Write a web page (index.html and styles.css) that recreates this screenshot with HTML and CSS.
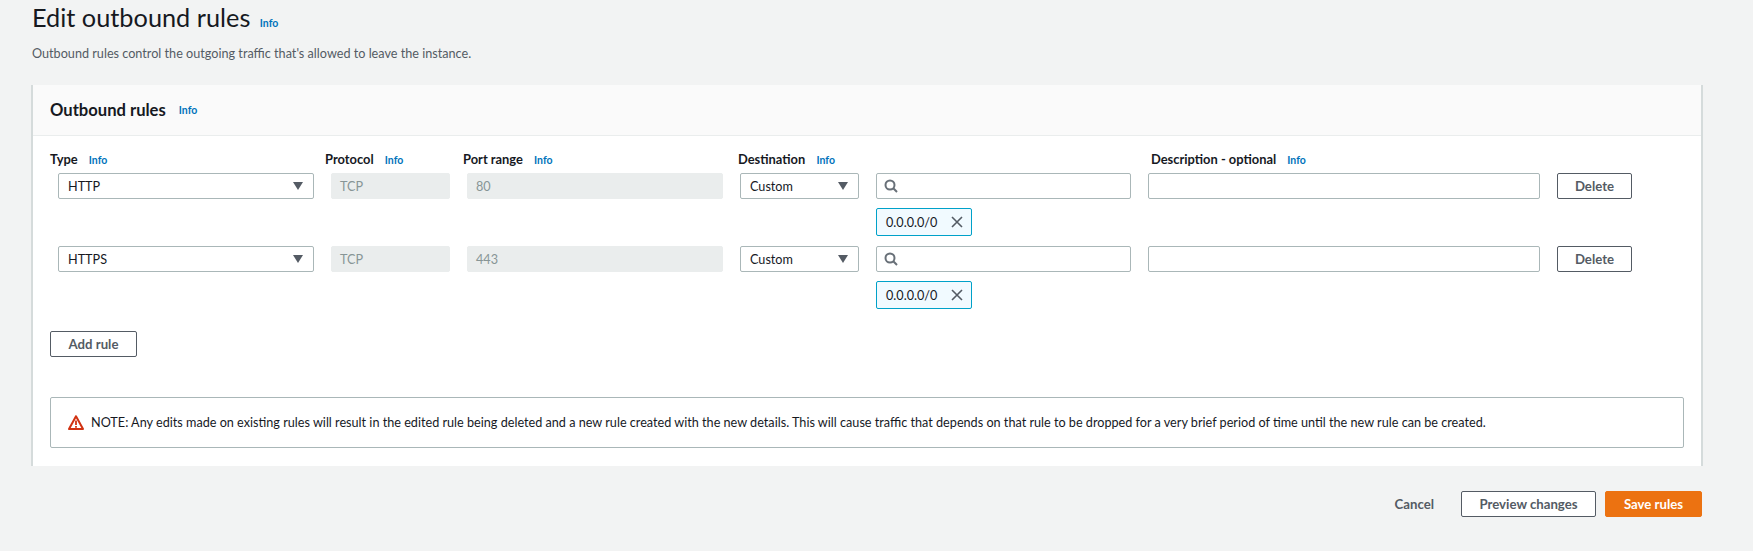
FILE: index.html
```html
<!DOCTYPE html>
<html lang="en">
<head>
    <meta charset="UTF-8">
    <title>Edit outbound rules</title>
    <link rel="stylesheet" href="styles.css">
</head>
<body>
    <section class="page-head">
        <h1>Edit outbound rules <a class="info" href="#">Info</a></h1>
        <p>Outbound rules control the outgoing traffic that's allowed to leave the instance.</p>
    </section>

    <section class="card">
        <header class="card-head">
            <h2>Outbound rules</h2>
            <a class="info" href="#">Info</a>
        </header>

        <div class="card-body">
            <div class="labels">
                <div class="label">Type <a class="info" href="#">Info</a></div>
                <div class="label">Protocol <a class="info" href="#">Info</a></div>
                <div class="label">Port range <a class="info" href="#">Info</a></div>
                <div class="label">Destination <a class="info" href="#">Info</a></div>
                <div class="label">Description - optional <a class="info" href="#">Info</a></div>
            </div>

            <!-- first rule -->
            <div class="rule">
                <div class="field select">HTTP <svg class="caret" viewBox="0 0 10 8"><path d="M0 0h10L5 8z"/></svg></div>
                <div class="field locked">TCP</div>
                <div class="field locked">80</div>
                <div class="field select">Custom <svg class="caret" viewBox="0 0 10 8"><path d="M0 0h10L5 8z"/></svg></div>
                <div class="field search"><svg class="glass" viewBox="0 0 14 14"><circle cx="6" cy="6" r="4.5"/><path d="M9.3 9.3L13 13"/></svg></div>
                <div class="field"></div>
                <button class="btn">Delete</button>
                <div class="token">0.0.0.0/0 <svg class="close" viewBox="0 0 12 12"><path d="M1 1l10 10M11 1L1 11"/></svg></div>
            </div>

            <!-- second rule -->
            <div class="rule">
                <div class="field select">HTTPS <svg class="caret" viewBox="0 0 10 8"><path d="M0 0h10L5 8z"/></svg></div>
                <div class="field locked">TCP</div>
                <div class="field locked">443</div>
                <div class="field select">Custom <svg class="caret" viewBox="0 0 10 8"><path d="M0 0h10L5 8z"/></svg></div>
                <div class="field search"><svg class="glass" viewBox="0 0 14 14"><circle cx="6" cy="6" r="4.5"/><path d="M9.3 9.3L13 13"/></svg></div>
                <div class="field"></div>
                <button class="btn">Delete</button>
                <div class="token">0.0.0.0/0 <svg class="close" viewBox="0 0 12 12"><path d="M1 1l10 10M11 1L1 11"/></svg></div>
            </div>

            <button class="btn add-rule">Add rule</button>

            <div class="note">
                <svg class="warn" viewBox="0 0 16 15"><path d="M8 1.2L1 14h14z" fill="none" stroke="#d13212" stroke-width="2" stroke-linejoin="round"/><path d="M8 5.5v4.5M8 11v1.8" stroke="#d13212" stroke-width="1.8" fill="none"/></svg>
                <span>NOTE: Any edits made on existing rules will result in the edited rule being deleted and a new rule created with the new details. This will cause traffic that depends on that rule to be dropped for a very brief period of time until the new rule can be created.</span>
            </div>
        </div>
    </section>

    <footer class="actions">
        <a class="cancel" href="#">Cancel</a>
        <button class="btn preview">Preview changes</button>
        <button class="btn primary">Save rules</button>
    </footer>
</body>
</html>
```

FILE: styles.css
```css
* {
    box-sizing: border-box;
}

body {
    margin: 0;
    height: 551px;
    overflow: hidden;
    padding: 0 50px 0 32px;
    background: #f2f3f3;
    color: #16191f;
    font-family: 'Lato', 'Noto Sans', sans-serif;
    font-size: 12.65px;
}

a {
    text-decoration: none;
}

.info {
    color: #0073bb;
    font-size: 10.5px;
    font-weight: 700;
}

h1 {
    margin: 0;
    height: 36px;
    font-size: 25.3px;
    font-weight: 400;
    line-height: 35px;
}

h1 .info {
    margin-left: 3px;
}

.page-head p {
    margin: 10px 0 0;
    color: #545b64;
    line-height: 16px;
}

.card {
    margin-top: 23px;
    margin-left: -1px;
    width: 1672px;
    height: 381px;
    background: #fff;
    border-left: 2px solid #d5dbdb;
    border-right: 2px solid #d5dbdb;
}

.card-head {
    display: flex;
    align-items: center;
    height: 51px;
    padding-left: 17px;
    background: #fafafa;
    border-bottom: 1px solid #eaeded;
}

.card-head h2 {
    margin: 0;
    font-size: 16.6px;
    font-weight: 700;
}

.card-head .info {
    margin-left: 13px;
}

.card-body {
    padding: 14px 18px 0 17px;
}

.labels {
    display: grid;
    grid-template-columns: 275px 138px 275px 413px auto;
    height: 23px;
    line-height: 18px;
}

.label {
    font-size: 12.9px;
    font-weight: 700;
}

.label .info {
    margin-left: 8px;
}

.rule {
    display: grid;
    grid-template-columns: 256px 119px 256px 119px 255px 392px 75px;
    grid-template-rows: 26px 28px;
    column-gap: 17px;
    row-gap: 9px;
    height: 73px;
    padding-left: 8px;
}

.field {
    display: flex;
    align-items: center;
    justify-content: space-between;
    padding: 0 10px 0 9px;
    background: #fff;
    border: 1px solid #aab7b8;
    border-radius: 2px;
}

.locked {
    background: #eaeded;
    border-color: #eaeded;
    color: #879596;
    padding-left: 8px;
}

.search {
    justify-content: flex-start;
    padding: 0 7px;
}

.caret {
    width: 10px;
    height: 8px;
    fill: #545b64;
}

.glass {
    width: 14px;
    height: 14px;
    fill: none;
    stroke: #687078;
    stroke-width: 2;
}

.token {
    grid-column: 5;
    grid-row: 2;
    display: flex;
    align-items: center;
    justify-content: space-between;
    width: 96px;
    padding: 0 8px 0 9px;
    background: #f1faff;
    border: 1px solid #00a1c9;
    border-radius: 2px;
}

.close {
    width: 12px;
    height: 12px;
    fill: none;
    stroke: #545b64;
    stroke-width: 1.6;
}

.btn {
    height: 26px;
    padding: 0;
    background: #fff;
    border: 1px solid #545b64;
    border-radius: 2px;
    color: #545b64;
    font-family: inherit;
    font-size: 13.2px;
    font-weight: 700;
}

.add-rule {
    display: block;
    margin-top: 12px;
    width: 87px;
}

.note {
    display: flex;
    align-items: center;
    gap: 7px;
    margin-top: 40px;
    width: 1634px;
    height: 51px;
    padding-left: 17px;
    border: 1px solid #aab7b8;
    border-radius: 2px;
}

.warn {
    width: 16px;
    height: 15px;
}

.actions {
    display: flex;
    align-items: center;
    justify-content: flex-end;
    margin-top: 25px;
    width: 1670px;
}

.cancel {
    margin-right: 27px;
    color: #545b64;
    font-size: 13.2px;
    font-weight: 700;
}

.preview {
    width: 135px;
    margin-right: 9px;
}

.primary {
    width: 97px;
    background: #ec7211;
    border-color: #ec7211;
    color: #fff;
}
```
